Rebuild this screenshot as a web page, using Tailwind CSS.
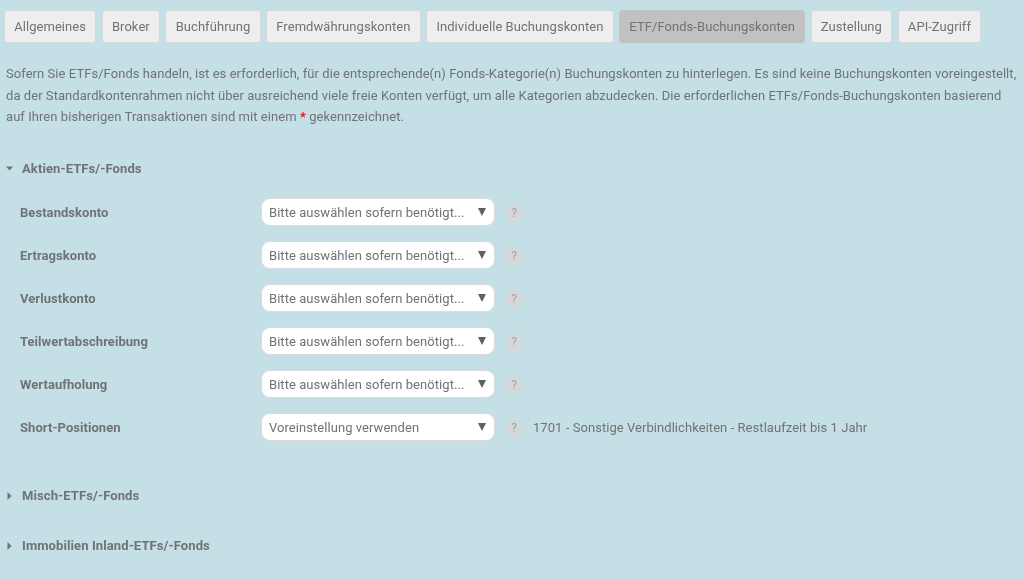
<!DOCTYPE html>
<html lang="de">
<head>
<meta charset="utf-8">
<script src="https://cdn.jsdelivr.net/npm/@tailwindcss/browser@4"></script>
</head>
<body class="bg-[#c5dfe6] font-['Roboto',sans-serif] text-[13px] text-[#6f7376] tracking-[0.055px] w-[1024px] h-[580px] overflow-hidden blur-[0.4px]">

<!-- tabs -->
<div class="flex gap-[5.5px] pl-[4px] pt-[10px] whitespace-nowrap">
  <div class="h-[33px] px-[9.2px] flex items-center bg-[#eeeeee] border border-[#d4d8d9] rounded-[3px]">Allgemeines</div>
  <div class="h-[33px] px-[9.2px] flex items-center bg-[#eeeeee] border border-[#d4d8d9] rounded-[3px]">Broker</div>
  <div class="h-[33px] px-[9.2px] flex items-center bg-[#eeeeee] border border-[#d4d8d9] rounded-[3px]">Buchführung</div>
  <div class="h-[33px] px-[9.2px] flex items-center bg-[#eeeeee] border border-[#d4d8d9] rounded-[3px]">Fremdwährungskonten</div>
  <div class="h-[33px] px-[9.2px] flex items-center bg-[#eeeeee] border border-[#d4d8d9] rounded-[3px]">Individuelle Buchungskonten</div>
  <div class="h-[33px] px-[9.2px] flex items-center bg-[#c1c1c1] border border-[#c1c1c1] rounded-[3px]">ETF/Fonds-Buchungskonten</div>
  <div class="h-[33px] px-[9.2px] flex items-center bg-[#eeeeee] border border-[#d4d8d9] rounded-[3px]">Zustellung</div>
  <div class="h-[33px] px-[9.2px] flex items-center bg-[#eeeeee] border border-[#d4d8d9] rounded-[3px]">API-Zugriff</div>
</div>

<!-- intro -->
<p class="mt-[20px] pl-[6px] w-[1024px] leading-[21.5px] whitespace-nowrap">
  Sofern Sie ETFs/Fonds handeln, ist es erforderlich, für die entsprechende(n) Fonds-Kategorie(n) Buchungskonten zu hinterlegen. Es sind keine Buchungskonten voreingestellt,<br>
  da der Standardkontenrahmen nicht über ausreichend viele freie Konten verfügt, um alle Kategorien abzudecken. Die erforderlichen ETFs/Fonds-Buchungskonten basierend<br>
  auf Ihren bisherigen Transaktionen sind mit einem <span class="text-[#e0101a] font-bold">*</span> gekennzeichnet.
</p>

<!-- open section -->
<div class="mt-[31px] pl-[6px] h-[20px] flex items-center font-bold tracking-[0.1px]">
  <svg class="w-[8px] h-[5px] mr-[8px] fill-[#6f7376]" viewBox="0 0 8 5"><path d="M0 0.5h7L3.5 4.5z"/></svg>
  Aktien-ETFs/-Fonds
</div>

<div class="mt-[19px] pl-[20px] flex flex-col gap-[15px]">
  <div class="flex items-center h-[28px]">
    <div class="w-[241px] pt-[2px] font-bold">Bestandskonto</div>
    <div class="w-[234px] h-[28px] bg-white rounded-[9px] border border-[#d9dcdd] flex items-center justify-between pl-[7px] pr-[8px]"><span class="pt-[2px]">Bitte auswählen sofern benötigt...</span><svg class="w-[8px] h-[8px] fill-[#5c6062]" viewBox="0 0 8 8"><path d="M0 0h8L4 8z"/></svg></div>
    <div class="ml-[10px] mt-[2px] w-[18px] h-[18px] rounded-full bg-[#d5d8d9] flex items-center justify-center text-[12px] text-[#a3a6a7]">?</div>
  </div>
  <div class="flex items-center h-[28px]">
    <div class="w-[241px] pt-[2px] font-bold">Ertragskonto</div>
    <div class="w-[234px] h-[28px] bg-white rounded-[9px] border border-[#d9dcdd] flex items-center justify-between pl-[7px] pr-[8px]"><span class="pt-[2px]">Bitte auswählen sofern benötigt...</span><svg class="w-[8px] h-[8px] fill-[#5c6062]" viewBox="0 0 8 8"><path d="M0 0h8L4 8z"/></svg></div>
    <div class="ml-[10px] mt-[2px] w-[18px] h-[18px] rounded-full bg-[#d5d8d9] flex items-center justify-center text-[12px] text-[#a3a6a7]">?</div>
  </div>
  <div class="flex items-center h-[28px]">
    <div class="w-[241px] pt-[2px] font-bold">Verlustkonto</div>
    <div class="w-[234px] h-[28px] bg-white rounded-[9px] border border-[#d9dcdd] flex items-center justify-between pl-[7px] pr-[8px]"><span class="pt-[2px]">Bitte auswählen sofern benötigt...</span><svg class="w-[8px] h-[8px] fill-[#5c6062]" viewBox="0 0 8 8"><path d="M0 0h8L4 8z"/></svg></div>
    <div class="ml-[10px] mt-[2px] w-[18px] h-[18px] rounded-full bg-[#d5d8d9] flex items-center justify-center text-[12px] text-[#a3a6a7]">?</div>
  </div>
  <div class="flex items-center h-[28px]">
    <div class="w-[241px] pt-[2px] font-bold">Teilwertabschreibung</div>
    <div class="w-[234px] h-[28px] bg-white rounded-[9px] border border-[#d9dcdd] flex items-center justify-between pl-[7px] pr-[8px]"><span class="pt-[2px]">Bitte auswählen sofern benötigt...</span><svg class="w-[8px] h-[8px] fill-[#5c6062]" viewBox="0 0 8 8"><path d="M0 0h8L4 8z"/></svg></div>
    <div class="ml-[10px] mt-[2px] w-[18px] h-[18px] rounded-full bg-[#d5d8d9] flex items-center justify-center text-[12px] text-[#a3a6a7]">?</div>
  </div>
  <div class="flex items-center h-[28px]">
    <div class="w-[241px] pt-[2px] font-bold">Wertaufholung</div>
    <div class="w-[234px] h-[28px] bg-white rounded-[9px] border border-[#d9dcdd] flex items-center justify-between pl-[7px] pr-[8px]"><span class="pt-[2px]">Bitte auswählen sofern benötigt...</span><svg class="w-[8px] h-[8px] fill-[#5c6062]" viewBox="0 0 8 8"><path d="M0 0h8L4 8z"/></svg></div>
    <div class="ml-[10px] mt-[2px] w-[18px] h-[18px] rounded-full bg-[#d5d8d9] flex items-center justify-center text-[12px] text-[#a3a6a7]">?</div>
  </div>
  <div class="flex items-center h-[28px]">
    <div class="w-[241px] pt-[2px] font-bold">Short-Positionen</div>
    <div class="w-[234px] h-[28px] bg-white rounded-[9px] border border-[#d9dcdd] flex items-center justify-between pl-[7px] pr-[8px]"><span class="pt-[2px]">Voreinstellung verwenden</span><svg class="w-[8px] h-[8px] fill-[#5c6062]" viewBox="0 0 8 8"><path d="M0 0h8L4 8z"/></svg></div>
    <div class="ml-[10px] mt-[2px] w-[18px] h-[18px] rounded-full bg-[#d5d8d9] flex items-center justify-center text-[12px] text-[#a3a6a7]">?</div>
    <div class="ml-[10px] pt-[2px]">1701 - Sonstige Verbindlichkeiten - Restlaufzeit bis 1 Jahr</div>
  </div>
</div>

<!-- closed sections -->
<div class="mt-[45px] pl-[7px] h-[20px] flex items-center font-bold tracking-[0.1px]">
  <svg class="w-[5px] h-[8px] mr-[10px] fill-[#6f7376]" viewBox="0 0 5 8"><path d="M0.5 0v8L4.5 4z"/></svg>
  Misch-ETFs/-Fonds
</div>
<div class="mt-[30px] pl-[7px] h-[20px] flex items-center font-bold tracking-[0.1px]">
  <svg class="w-[5px] h-[8px] mr-[10px] fill-[#6f7376]" viewBox="0 0 5 8"><path d="M0.5 0v8L4.5 4z"/></svg>
  Immobilien Inland-ETFs/-Fonds
</div>

</body>
</html>
